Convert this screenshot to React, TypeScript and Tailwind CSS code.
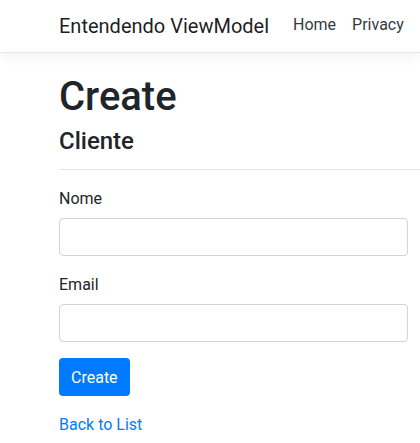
import React from "react";

export default function App() {
  return (
    <div
      className="min-h-[443px] w-[420px] overflow-hidden bg-white text-[#212529]"
      style={{ fontFamily: "Roboto, 'Noto Sans', sans-serif" }}
    >
      <header className="relative z-10 h-[53px] border-b border-[#e5e5e5] bg-white shadow-[0_4px_12px_rgba(0,0,0,0.05)]">
        <div className="flex items-start pl-[59px] pt-[11px]">
          <span className="text-[20px] leading-[30px] text-black/90">Entendendo ViewModel</span>
          <nav className="ml-[24px] mt-[2px] flex gap-[16px] text-[16px] leading-[24px] text-[#343a40]">
            <a>Home</a>
            <a>Privacy</a>
          </nav>
        </div>
      </header>

      <main className="pl-[59px] pt-[20px]">
        <h1 className="text-[40px] font-medium leading-[48px]">Create</h1>
        <h4 className="mt-[6px] text-[24px] font-medium leading-[29px]">Cliente</h4>
        <hr className="mt-[13px] border-0 border-t border-black/10" />

        <form className="mt-[16px] w-[349px]">
          <div className="mb-[16px]">
            <label className="mb-[7px] block pt-[1px] text-[16px] leading-[24px]">Nome</label>
            <input
              type="text"
              className="block h-[38px] w-full rounded border border-[#ced4da] bg-white px-3"
            />
          </div>
          <div className="mb-[16px]">
            <label className="mb-[7px] block pt-[1px] text-[16px] leading-[24px]">Email</label>
            <input
              type="text"
              className="block h-[38px] w-full rounded border border-[#ced4da] bg-white px-3"
            />
          </div>
          <div className="mb-[16px]">
            <button
              type="button"
              className="h-[38px] rounded bg-[#007bff] px-[12px] pt-[2px] text-[16px] leading-[24px] text-white"
            >
              Create
            </button>
          </div>
        </form>

        <div className="pt-[1px] text-[16px] leading-[24px]">
          <a className="text-[#007bff]">Back to List</a>
        </div>
      </main>
    </div>
  );
}
